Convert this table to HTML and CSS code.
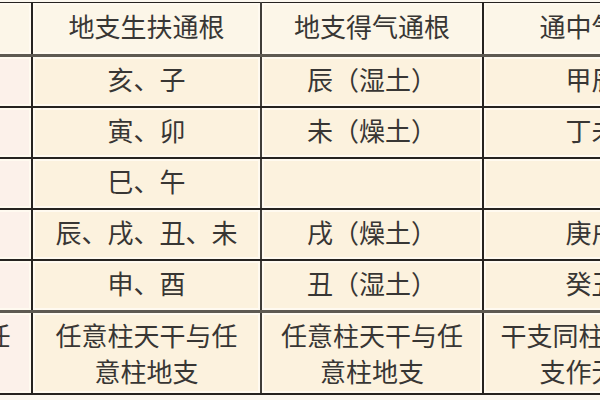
FILE: index.html
```html
<!DOCTYPE html>
<html lang="zh">
<head>
<meta charset="utf-8">
<link rel="stylesheet" href="styles.css">
</head>
<body>
<div class="page">
<table class="roots">
<colgroup>
<col class="c1"><col class="c2"><col class="c3"><col class="c4">
</colgroup>
<tr class="head">
<td class="lead">天干</td><td>地支生扶通根</td><td>地支得气通根</td><td>通中气通根</td>
</tr>
<tr class="sep-gray"><td class="lead">甲乙</td><td>亥、子</td><td>辰（湿土）</td><td>甲辰日</td></tr>
<tr><td class="lead">丙丁</td><td>寅、卯</td><td>未（燥土）</td><td>丁未日</td></tr>
<tr><td class="lead">戊己</td><td>巳、午</td><td></td><td></td></tr>
<tr><td class="lead">庚辛</td><td>辰、戌、丑、未</td><td>戌（燥土）</td><td>庚戌日</td></tr>
<tr><td class="lead">壬癸</td><td>申、酉</td><td>丑（湿土）</td><td>癸丑日</td></tr>
<tr class="sep-gray last"><td class="lead">可取任<br>意柱</td><td>任意柱天干与任<br>意柱地支</td><td>任意柱天干与任<br>意柱地支</td><td>干支同柱天干与地<br>支作无根论</td></tr>
</table>
<div class="below"></div>
</div>
</body>
</html>
```
FILE: styles.css
```css
html, body {
  margin: 0;
  padding: 0;
  background: #fbf7ef;
}
.page {
  width: 600px;
  height: 400px;
  overflow: hidden;
  padding-top: 2px;
  box-sizing: border-box;
}
.roots {
  margin-left: -90px;
  border-collapse: collapse;
  table-layout: fixed;
  width: 815px;
  font-family: "Noto Sans CJK SC", "Noto Sans", sans-serif;
  font-size: 26px;
  color: #383634;
}
.c1 { width: 121px; }
.c2 { width: 229px; }
.c3 { width: 222px; }
.c4 { width: 243px; }
.roots td {
  border: 2px solid #262320;
  background: #fcf2de;
  text-align: center;
  vertical-align: middle;
  height: 43px;
  padding: 0 0 6px 0;
  line-height: 34px;
  box-shadow: inset 0 0 0 2px #fffaf0;
}
.roots td.lead {
  background: #fcf1ea;
  border-right-width: 1px;
}
.roots .head td {
  background: #fcf6e8;
  border-top-width: 1px;
  height: 45px;
}
.roots .sep-gray td {
  border-top: 3px solid #5e5a52;
}
.roots tr td:nth-child(2) {
  border-right-color: #403d38;
}
.roots .last td {
  height: 80px;
  padding: 0;
  line-height: 36px;
}
```
